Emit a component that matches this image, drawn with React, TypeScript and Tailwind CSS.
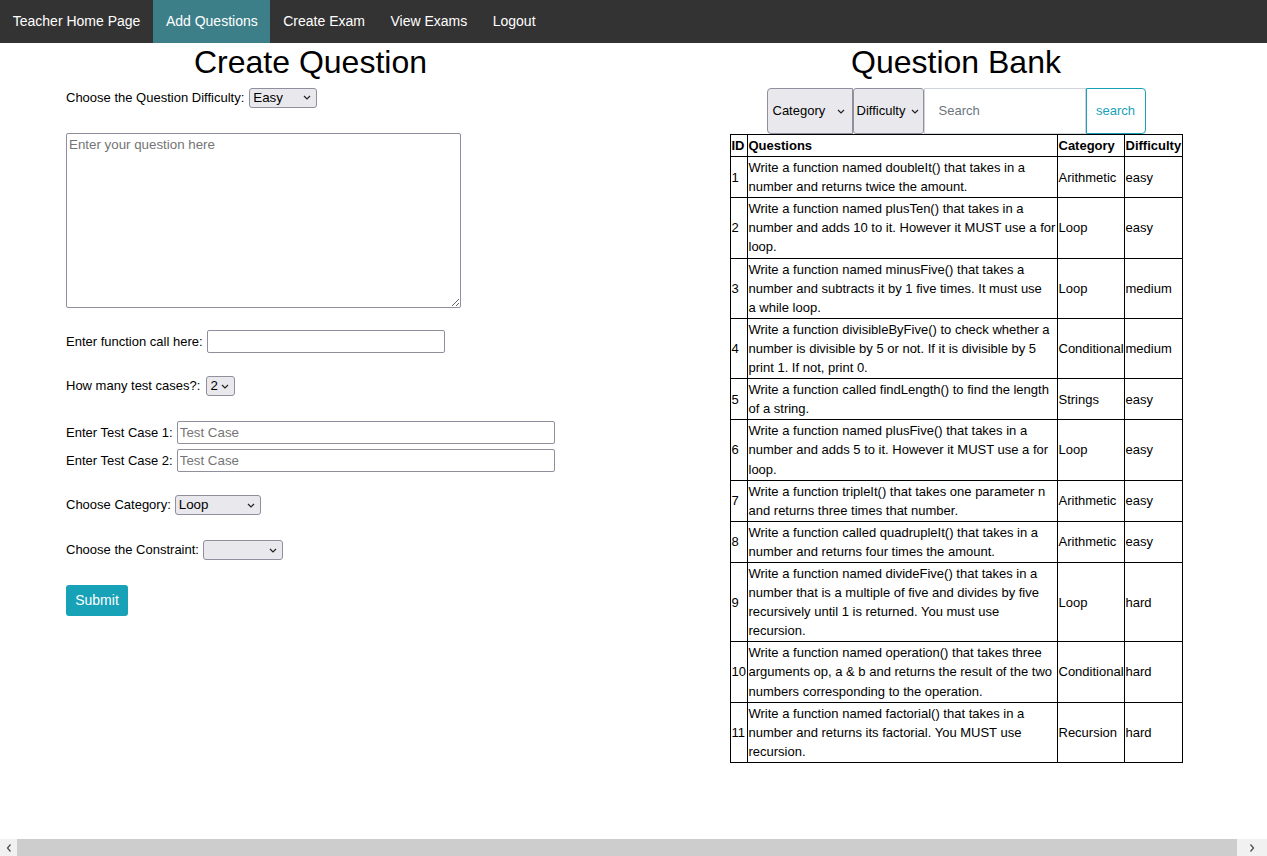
import React from 'react';

// lines kept as they wrap in the original
const questions = [
  { id: 1, lines: ['Write a function named doubleIt() that takes in a', 'number and returns twice the amount.'], cat: 'Arithmetic', diff: 'easy' },
  { id: 2, lines: ['Write a function named plusTen() that takes in a', 'number and adds 10 to it. However it MUST use a for', 'loop.'], cat: 'Loop', diff: 'easy' },
  { id: 3, lines: ['Write a function named minusFive() that takes a', 'number and subtracts it by 1 five times. It must use', 'a while loop.'], cat: 'Loop', diff: 'medium' },
  { id: 4, lines: ['Write a function divisibleByFive() to check whether a', 'number is divisible by 5 or not. If it is divisible by 5', 'print 1. If not, print 0.'], cat: 'Conditional', diff: 'medium' },
  { id: 5, lines: ['Write a function called findLength() to find the length', 'of a string.'], cat: 'Strings', diff: 'easy' },
  { id: 6, lines: ['Write a function named plusFive() that takes in a', 'number and adds 5 to it. However it MUST use a for', 'loop.'], cat: 'Loop', diff: 'easy' },
  { id: 7, lines: ['Write a function tripleIt() that takes one parameter n', 'and returns three times that number.'], cat: 'Arithmetic', diff: 'easy' },
  { id: 8, lines: ['Write a function called quadrupleIt() that takes in a', 'number and returns four times the amount.'], cat: 'Arithmetic', diff: 'easy' },
  { id: 9, lines: ['Write a function named divideFive() that takes in a', 'number that is a multiple of five and divides by five', 'recursively until 1 is returned. You must use', 'recursion.'], cat: 'Loop', diff: 'hard' },
  { id: 10, lines: ['Write a function named operation() that takes three', 'arguments op, a & b and returns the result of the two', 'numbers corresponding to the operation.'], cat: 'Conditional', diff: 'hard' },
  { id: 11, lines: ['Write a function named factorial() that takes in a', 'number and returns its factorial. You MUST use', 'recursion.'], cat: 'Recursion', diff: 'hard' },
];

const navItems = ['Teacher Home Page', 'Add Questions', 'Create Exam', 'View Exams', 'Logout'];

function Chevron() {
  return (
    <svg width="8" height="5" viewBox="0 0 8 5" className="shrink-0">
      <path d="M1 1 L4 4 L7 1" fill="none" stroke="#222" strokeWidth="1.2" />
    </svg>
  );
}

// fake select box, Chrome look
function Select({ value, w }: { value: string; w: string }) {
  return (
    <div className={`${w} h-[20px] flex items-center justify-between pl-[3px] pr-[5px] bg-[#e9e9ed] border border-[#8f8f9d] rounded-[3px] text-[13.33px] text-black`}>
      <span>{value}</span>
      <Chevron />
    </div>
  );
}

function TextInput({ w, placeholder }: { w: string; placeholder?: string }) {
  return (
    <input
      placeholder={placeholder}
      className={`${w} h-[23px] px-[2px] border border-[#8f8f9d] rounded-[2px] text-[13.33px] placeholder:text-[#757575] outline-none`}
    />
  );
}

export default function App() {
  return (
    <div className="w-[1267px] h-[856px] flex flex-col bg-white overflow-hidden font-['Liberation_Sans',Arial,sans-serif] text-[13px] text-black">
      {/* top nav */}
      <nav className="h-[43px] flex bg-[#333333] shrink-0">
        {navItems.map(n => (
          <a
            key={n}
            className={`px-[12.75px] flex items-center text-[14px] text-white ${n === 'Add Questions' ? 'bg-[#3d7f89]' : ''}`}
          >
            {n}
          </a>
        ))}
      </nav>

      <div className="flex-1 flex">
        {/* left: create question */}
        <div className="w-[621px] shrink-0">
          <h1 className="text-[32px] leading-[38px] text-center">Create Question</h1>
          <div className="pl-[66px] flex flex-col items-start">
            <div className="mt-[7px] flex items-center gap-[5px] h-[19px]">
              <span>Choose the Question Difficulty:</span>
              <Select value="Easy" w="w-[68px]" />
            </div>
            <textarea
              placeholder="Enter your question here"
              className="mt-[26px] w-[395px] h-[175px] px-[2px] py-[1px] border border-[#8f8f9d] rounded-[2px] text-[13.33px] placeholder:text-[#757575] outline-none"
            />
            <div className="mt-[22px] flex items-center gap-[4px]">
              <span>Enter function call here:</span>
              <TextInput w="w-[238px]" />
            </div>
            <div className="mt-[23px] flex items-center gap-[6px]">
              <span>How many test cases?:</span>
              <Select value="2" w="w-[29px]" />
            </div>
            <div className="mt-[25px] flex items-center gap-[4px]">
              <span>Enter Test Case 1:</span>
              <TextInput w="w-[378px]" placeholder="Test Case" />
            </div>
            <div className="mt-[5px] flex items-center gap-[4px]">
              <span>Enter Test Case 2:</span>
              <TextInput w="w-[378px]" placeholder="Test Case" />
            </div>
            <div className="mt-[23px] flex items-center gap-[4px]">
              <span>Choose Category:</span>
              <Select value="Loop" w="w-[86px]" />
            </div>
            <div className="mt-[25px] flex items-center gap-[4px]">
              <span>Choose the Constraint:</span>
              <Select value="" w="w-[80px]" />
            </div>
            <button className="mt-[25px] w-[62px] h-[31px] bg-[#17a2b8] text-white text-[14px] rounded-[3px]">
              Submit
            </button>
          </div>
        </div>

        {/* right: question bank */}
        <div className="flex-1 pl-[24px] flex flex-col items-center">
          <h1 className="text-[32px] leading-[38px] text-center">Question Bank</h1>
          <div className="mt-[7px] flex h-[46px]">
            <div className="w-[86px] flex items-center justify-between pl-[5px] pr-[7px] bg-[#e9e9ed] border border-[#8f8f9d] rounded-l-[4px]">
              <span>Category</span>
              <Chevron />
            </div>
            <div className="w-[71px] flex items-center justify-between pl-[3px] pr-[4px] bg-[#e9e9ed] border border-[#8f8f9d] rounded-[3px]">
              <span>Difficulty</span>
              <Chevron />
            </div>
            <input
              placeholder="Search"
              className="w-[162px] pl-[14px] border border-[#ced4da] text-[13px] placeholder:text-[#6c757d] outline-none"
            />
            <button className="w-[60px] border border-[#17a2b8] text-[#17a2b8] rounded-r-[4px] text-[13px]">
              search
            </button>
          </div>
          <table className="w-[452px] table-fixed border-collapse leading-[19.1px]">
            <colgroup>
              <col className="w-[17px]" />
              <col className="w-[310px]" />
              <col className="w-[67px]" />
              <col className="w-[58px]" />
            </colgroup>
            <thead>
              <tr className="font-bold text-left">
                <th className="border border-black p-px">ID</th>
                <th className="border border-black p-px">Questions</th>
                <th className="border border-black p-px">Category</th>
                <th className="border border-black p-px">Difficulty</th>
              </tr>
            </thead>
            <tbody>
              {questions.map(q => (
                <tr key={q.id}>
                  <td className="border border-black p-px">{q.id}</td>
                  <td className="border border-black p-px whitespace-nowrap">
                    {q.lines.map((l, i) => (
                      <div key={i}>{l}</div>
                    ))}
                  </td>
                  <td className="border border-black p-px">{q.cat}</td>
                  <td className="border border-black p-px">{q.diff}</td>
                </tr>
              ))}
            </tbody>
          </table>
        </div>
      </div>

      {/* horizontal scrollbar */}
      <div className="h-[17px] shrink-0 flex bg-[#f1f1f1]">
        <div className="w-[17px] flex items-center justify-center">
          <svg width="6" height="8" viewBox="0 0 6 8"><path d="M4.5 0.5 L1.5 4 L4.5 7.5" fill="none" stroke="#505050" strokeWidth="1.3" /></svg>
        </div>
        <div className="flex-1 bg-[#cdcdcd]" />
        <div className="w-[30px] flex items-center justify-center">
          <svg width="6" height="8" viewBox="0 0 6 8"><path d="M1.5 0.5 L4.5 4 L1.5 7.5" fill="none" stroke="#505050" strokeWidth="1.3" /></svg>
        </div>
      </div>
    </div>
  );
}
